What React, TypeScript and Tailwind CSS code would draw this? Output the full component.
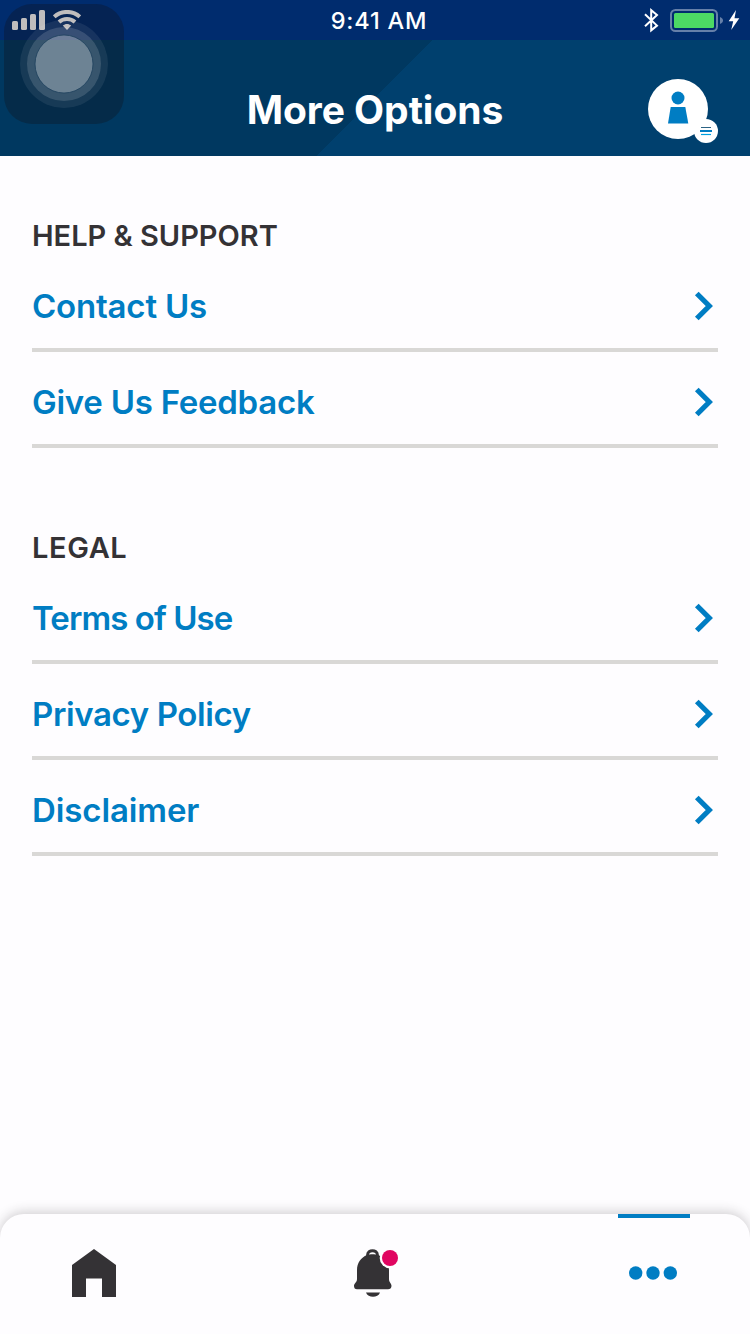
const sections = [
  {
    title: "HELP & SUPPORT",
    titleClass: "tracking-[-0.02px]",
    gap: "pt-[60px]",
    items: [
      { label: "Contact Us", cls: "tracking-[-0.2px]" },
      { label: "Give Us Feedback", cls: "tracking-[-0.25px]" },
    ],
  },
  {
    title: "LEGAL",
    titleClass: "tracking-[0.6px]",
    gap: "pt-[80px]",
    items: [
      { label: "Terms of Use", cls: "tracking-[-0.92px]" },
      { label: "Privacy Policy", cls: "tracking-[-0.38px]" },
      { label: "Disclaimer", cls: "tracking-[-0.1px]" },
    ],
  },
];

function StatusBar() {
  return (
    <div className="grid h-10 shrink-0 grid-cols-3 items-center bg-[#002c6e] text-white">
      <div className="flex h-10 items-start gap-2 pl-3 pt-2.5">
        <svg width="33" height="20" viewBox="0 0 33 20" fill="currentColor">
          <rect x="0" y="11" width="6" height="9" rx="1.6" />
          <rect x="9" y="8" width="6" height="12" rx="1.6" />
          <rect x="18" y="4" width="6" height="16" rx="1.6" />
          <rect x="27" y="0" width="6" height="20" rx="1.6" />
        </svg>
        <svg width="28" height="20" viewBox="0 0 28 20" fill="none" stroke="currentColor" strokeWidth="4">
          <path d="M1.2 6.8C8.5 .3 19.5 .3 26.8 6.8" />
          <path d="M6 12C10.5 8 17.5 8 22 12" />
          <path d="M14 20L9.800 15.600C12.200 13.400 15.800 13.400 18.200 15.600Z" fill="currentColor" stroke="none" />
        </svg>
      </div>
      <div className="h-10 pl-[8px] pt-px text-center font-['Inter',sans-serif] text-[23.5px] font-medium leading-[39px] tracking-[0.8px]">9:41 AM</div>
      <div className="flex h-10 items-start justify-end pr-2.5 pt-2">
        <svg className="mr-[11px]" width="15" height="25" viewBox="0 0 15 25" fill="none" stroke="currentColor" strokeWidth="2">
          <path d="M1 6.200L13 17.600L7.200 22.300V2.200L13 7L1 18.200" />
        </svg>
        <svg width="54" height="25" viewBox="0 0 54 25">
          <rect x="1" y="2" width="46" height="21" rx="4.5" fill="none" stroke="#6680a9" strokeWidth="2" />
          <rect x="4" y="5" width="40" height="15" rx="1.5" fill="#4cd964" />
          <path d="M50 9C54 10.500 54 14.500 50 16Z" fill="#6680a9" />
        </svg>
        <svg className="ml-1" width="12" height="25" viewBox="0 0 12 25" fill="currentColor">
          <path d="M8 2L.7 13.300H5.200L3.200 22L11.300 10.300H6.500Z" />
        </svg>
      </div>
    </div>
  );
}

function Avatar() {
  return (
    <svg width="72" height="66" viewBox="0 0 72 66">
      <circle cx="31" cy="31" r="30" fill="#fff" />
      <circle cx="59" cy="53" r="12" fill="#fff" />
      <circle cx="31" cy="20" r="6.500" fill="#007dc3" />
      <path d="M23.700 29H38.300L41.300 45.500H21Z" fill="#007dc3" />
      <path d="M54 49.500H64" stroke="#2c6384" strokeWidth="1" />
      <path d="M53 53H65" stroke="#007dc3" strokeWidth="2" />
      <path d="M54 56.500H64" stroke="#00a0e0" strokeWidth="1.200" />
    </svg>
  );
}

function Header() {
  return (
    <header className="grid h-[116px] shrink-0 grid-cols-[1fr_auto_1fr] items-center bg-[linear-gradient(135deg,#003860_0%,#003860_49.9%,#00406e_50%)]">
      <div />
      <h1 className="pt-[23px] text-[39px] font-bold leading-[48px] tracking-[-0.05px] text-white">More Options</h1>
      <div className="flex justify-end pr-[31px] pt-[26px]">
        <Avatar />
      </div>
    </header>
  );
}

function AssistiveTouch() {
  return (
    <div className="absolute left-1 top-1 flex size-[120px] items-center justify-center rounded-[28px] bg-[rgba(20,10,10,0.27)]">
      <svg width="88" height="88" viewBox="0 0 88 88">
        <circle cx="44" cy="44" r="44" fill="#fff" fillOpacity=".075" />
        <circle cx="44" cy="44" r="37" fill="#fff" fillOpacity=".14" />
        <circle cx="44" cy="44" r="29" fill="#fff" fillOpacity=".27" stroke="#1d405c" strokeOpacity=".8" strokeWidth="1" />
      </svg>
    </div>
  );
}

function NavBar() {
  return (
    <nav className="grid h-[120px] shrink-0 grid-cols-[188px_1fr_192px] rounded-t-[24px] bg-[#fefdff] shadow-[0_-2px_12px_rgba(40,35,40,0.22)]">
      <a className="flex justify-center pt-[35px]">
        <svg width="44" height="48" viewBox="0 0 44 48" fill="#343235">
          <path d="M22 0L44 16V48H30V29.500H14V48H0V16Z" />
        </svg>
      </a>
      <a className="flex justify-start pl-[165px] pt-[34px]">
        <svg width="46" height="50" viewBox="0 0 46 50">
          <path d="M14.600 8.500V7C14.600 1.300 24.400 1.300 24.400 7V8.500" fill="none" stroke="#343235" strokeWidth="3" />
          <path d="M14 7C17 6 22 6 25 7C31.500 9.500 36 15 36 22V31C36 34.500 38.500 35 38.500 38C38.500 40 37 41.300 35 41.300H4C2 41.300 1 40 1 38C1 35 4 34.500 4 31V22C4 15 8 9.500 14 7Z" fill="#343235" />
          <path d="M13 44.500H27C25 50.300 15 50.300 13 44.500Z" fill="#343235" />
          <circle cx="37" cy="10" r="10.300" fill="#fefdff" />
          <circle cx="37" cy="10" r="8" fill="#e00561" />
        </svg>
      </a>
      <a className="flex flex-col items-center">
        <div className="h-1 w-[72px] bg-[#007dc3]" />
        <svg className="mr-[2px] mt-12" width="48" height="14" viewBox="0 0 48 14" fill="#007dc3">
          <circle cx="6.700" cy="7" r="6.700" />
          <circle cx="24" cy="7" r="6.700" />
          <circle cx="41.300" cy="7" r="6.700" />
        </svg>
      </a>
    </nav>
  );
}

export default function App() {
  return (
    <div className="relative flex h-[1334px] w-[750px] flex-col overflow-hidden bg-[#fefdff] font-['Inter',sans-serif]">
      <StatusBar />
      <Header />
      <main className="flex-1 px-8">
        {sections.map((s) => (
          <section key={s.title} className={s.gap}>
            <h2 className={`h-10 text-[29px] font-semibold leading-10 text-[#343235] ${s.titleClass}`}>{s.title}</h2>
            {s.items.map((i) => (
              <a key={i.label} className="flex h-24 items-center justify-between border-b-4 border-[#d9d8d6] pr-1 pt-2 text-[#007dc3]">
                <span className={`text-[33px] font-semibold leading-10 ${i.cls}`}>{i.label}</span>
                <svg width="20" height="30" viewBox="0 0 20 30" fill="none" stroke="currentColor" strokeWidth="5.2">
                  <path d="M2.800 2.500L15.300 15L2.800 27.500" />
                </svg>
              </a>
            ))}
          </section>
        ))}
      </main>
      <NavBar />
      <AssistiveTouch />
    </div>
  );
}
